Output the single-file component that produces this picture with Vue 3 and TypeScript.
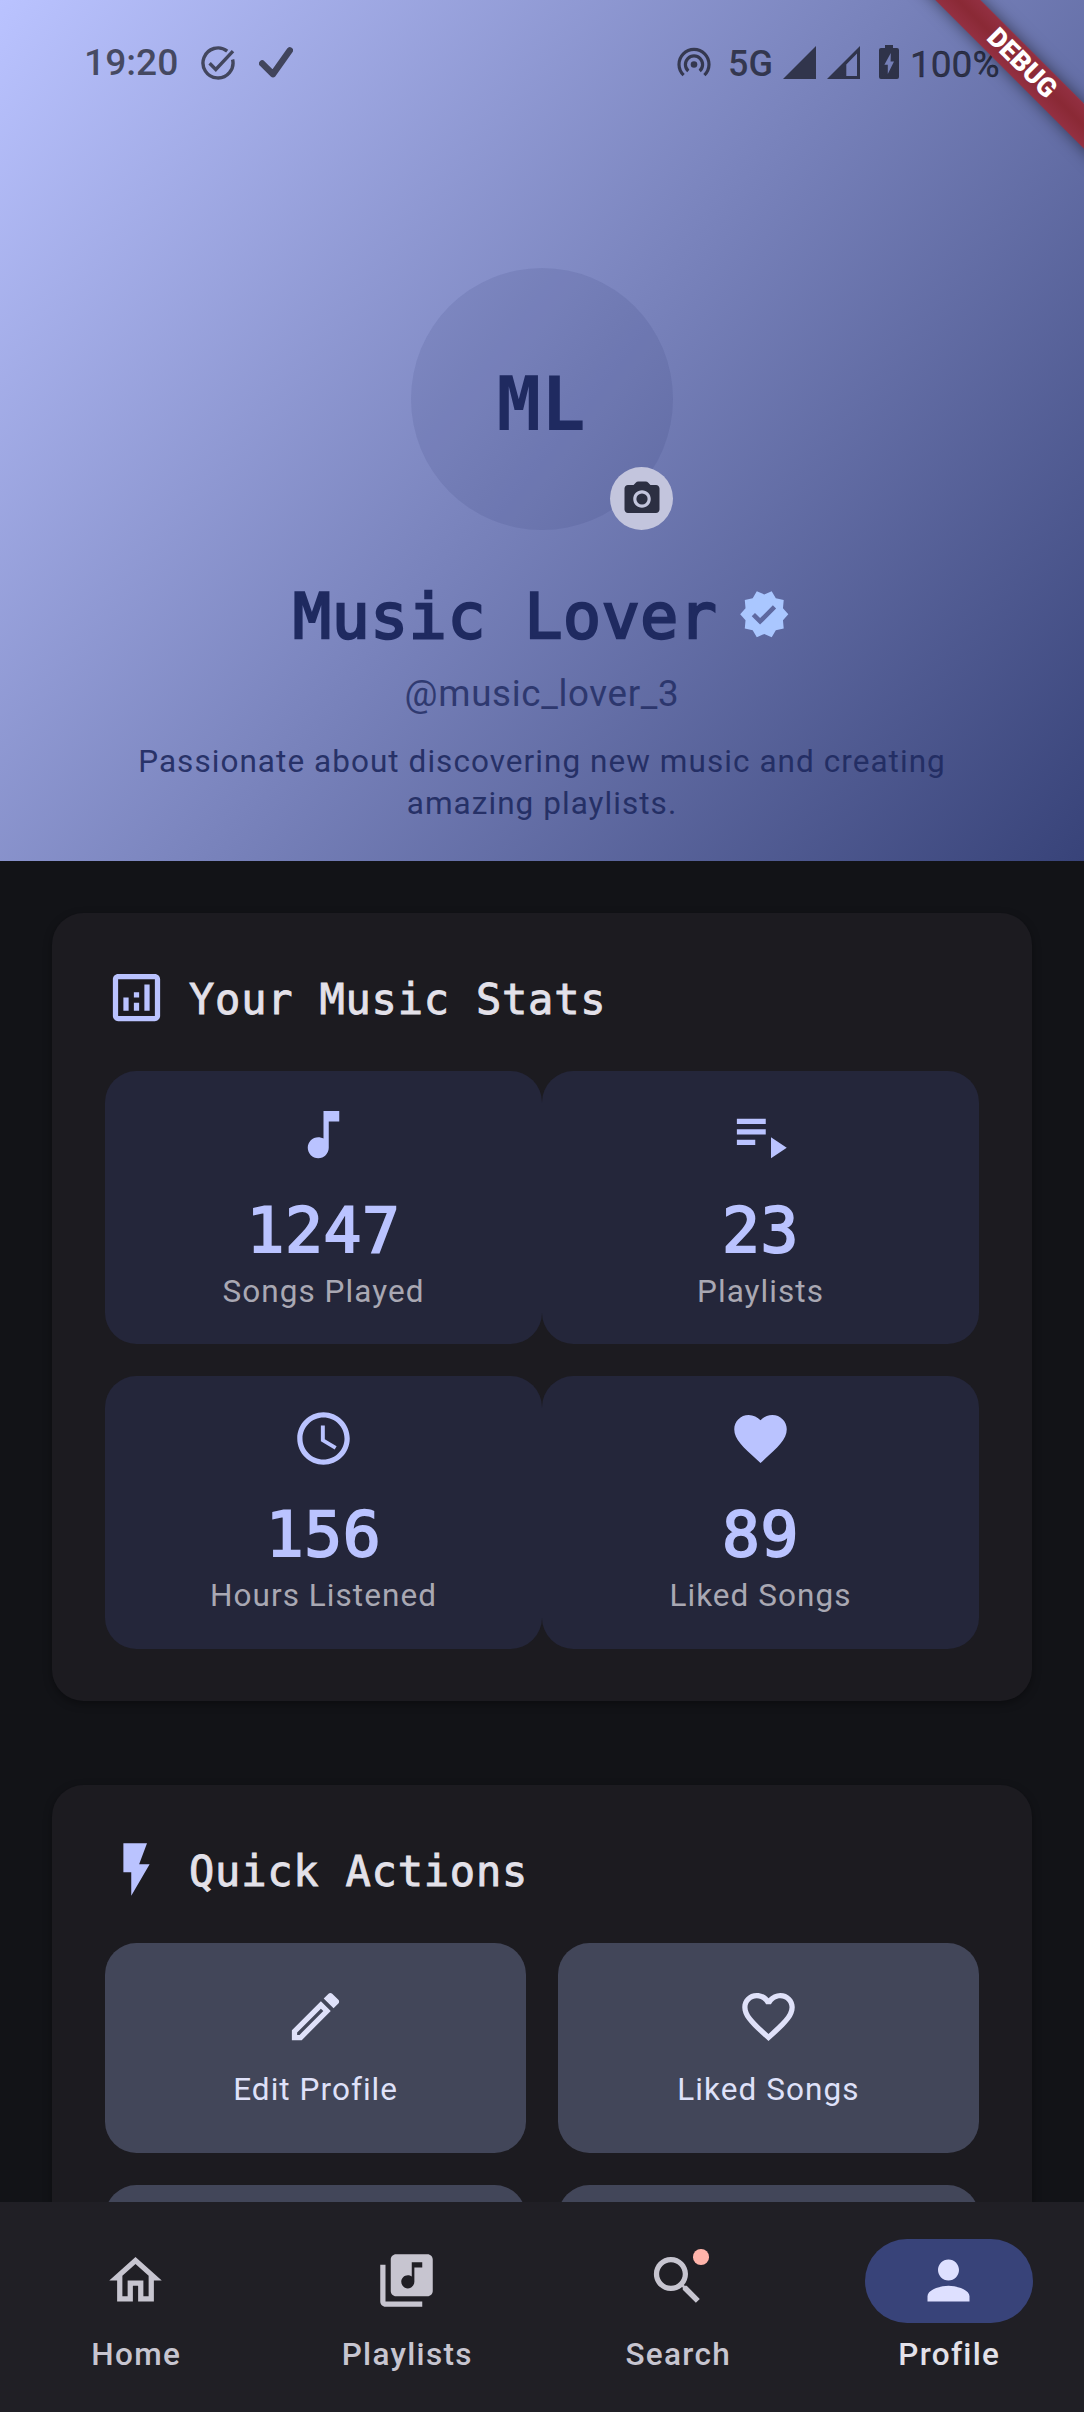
<script setup lang="ts">
interface Item {
  label: string
  icon: string
}
interface Stat extends Item {
  value: string
}
interface Tab extends Item {
  active?: boolean
  dot?: boolean
}

const heart =
  'M12 21.35l-1.45-1.32C5.4 15.36 2 12.28 2 8.5 2 5.42 4.42 3 7.5 3c1.74 0 3.41.81 4.5 2.09C13.09 3.81 14.76 3 16.5 3 19.58 3 22 5.42 22 8.5c0 3.78-3.4 6.86-8.55 11.54L12 21.35z'

const stats: Stat[] = [
  { value: '1247', label: 'Songs Played', icon: 'M12 3v10.55c-.59-.34-1.27-.55-2-.55-2.21 0-4 1.79-4 4s1.79 4 4 4 4-1.79 4-4V7h4V3h-6z' },
  { value: '23', label: 'Playlists', icon: 'M3 6h11v2H3zM3 10h11v2H3zM3 14h7v2H3zM16 13v8l6-4z' },
  {
    value: '156',
    label: 'Hours Listened',
    icon: 'M11.99 2C6.47 2 2 6.48 2 12s4.47 10 9.99 10C17.52 22 22 17.52 22 12S17.52 2 11.99 2zM12 20c-4.42 0-8-3.58-8-8s3.58-8 8-8 8 3.58 8 8-3.58 8-8 8zM12.5 7H11v6l5.25 3.15.75-1.23-4.5-2.67z',
  },
  { value: '89', label: 'Liked Songs', icon: heart },
]

const actions: Item[] = [
  {
    label: 'Edit Profile',
    icon: 'M14.06 9.02l.92.92L5.92 19H5v-.92l9.06-9.06M17.66 3c-.25 0-.51.1-.7.29l-1.83 1.83 3.75 3.75 1.83-1.83c.39-.39.39-1.02 0-1.41l-2.34-2.34c-.2-.2-.45-.29-.71-.29zm-3.6 3.19L3 17.25V21h3.75L17.81 9.94l-3.75-3.75z',
  },
  {
    label: 'Liked Songs',
    icon: 'M16.5 3c-1.74 0-3.41.81-4.5 2.09C10.91 3.81 9.24 3 7.5 3 4.42 3 2 5.42 2 8.5c0 3.78 3.4 6.86 8.55 11.54L12 21.35l1.45-1.32C18.6 15.36 22 12.28 22 8.5 22 5.42 19.58 3 16.5 3zm-4.4 15.55l-.1.1-.1-.1C7.14 14.24 4 11.39 4 8.5 4 6.5 5.5 5 7.5 5c1.54 0 3.04.99 3.57 2.36h1.87C13.46 5.99 14.96 5 16.5 5c2 0 3.5 1.5 3.5 3.5 0 2.89-3.14 5.74-7.9 10.05z',
  },
]

const tabs: Tab[] = [
  { label: 'Home', icon: 'M12 5.69l5 4.5V18h-2v-6H9v6H7v-7.81l5-4.5M12 3L2 12h3v8h6v-6h2v6h6v-8h3L12 3z' },
  {
    label: 'Playlists',
    icon: 'M20 2H8c-1.1 0-2 .9-2 2v12c0 1.1.9 2 2 2h12c1.1 0 2-.9 2-2V4c0-1.1-.9-2-2-2zm-2 5h-3v5.5c0 1.38-1.12 2.5-2.5 2.5S10 13.88 10 12.5s1.12-2.5 2.5-2.5c.57 0 1.08.19 1.5.51V5h4v2zM4 6H2v14c0 1.1.9 2 2 2h14v-2H4V6z',
  },
  {
    label: 'Search',
    dot: true,
    icon: 'M15.5 14h-.79l-.28-.27C15.41 12.59 16 11.11 16 9.5 16 5.91 13.09 3 9.5 3S3 5.91 3 9.5 5.91 16 9.5 16c1.61 0 3.09-.59 4.23-1.57l.27.28v.79l5 4.99L20.49 19l-4.99-5zm-6 0C7.01 14 5 11.99 5 9.5S7.01 5 9.5 5 14 7.01 14 9.5 11.99 14 9.5 14z',
  },
  {
    label: 'Profile',
    active: true,
    icon: 'M12 12c2.21 0 4-1.79 4-4s-1.79-4-4-4-4 1.79-4 4 1.79 4 4 4zm0 2c-2.67 0-8 1.34-8 4v2h16v-2c0-2.66-5.33-4-8-4z',
  },
]
</script>

<template>
  <div class="screen">
    <header class="hero">
      <div class="status">
        <span class="time">19:20</span>
        <svg class="s-task" viewBox="0 0 34 34">
          <path d="M26.2 5.1A15 15 0 1 0 31.6 13.5" />
          <path d="M8.6 17.2l6.2 6.3L32 5.2" />
        </svg>
        <svg class="s-check" viewBox="0 0 34 32"><path d="M3.2 16.5L14 27.2L30.8 3.4" /></svg>
        <span class="grow"></span>
        <svg class="s-hot" viewBox="0 0 34 34">
          <circle cx="17" cy="18.5" r="3.3" />
          <path d="M11.3 25a8.6 8.6 0 1 1 11.4 0" />
          <path d="M6.6 29.2a15 15 0 1 1 20.8 0" />
        </svg>
        <span class="net">5G</span>
        <svg class="s-sig" viewBox="0 0 33 33"><path d="M0 33L33 0V33z" /></svg>
        <svg class="s-sig second" viewBox="0 0 33 33">
          <path fill-rule="evenodd" d="M0 33L33 0V33zM19.3 18.6V30H30V7.6z" />
        </svg>
        <svg class="s-bat" viewBox="0 0 20 34">
          <path
            fill-rule="evenodd"
            d="M6 0h8v3h4a2 2 0 0 1 2 2v27a2 2 0 0 1-2 2H2a2 2 0 0 1-2-2V5a2 2 0 0 1 2-2h4zM11.8 8L5.4 19.8H8.8V29L15 16.6H11.6z"
          />
        </svg>
        <span class="pct">100%</span>
      </div>

      <div class="ribbon-clip"><div class="ribbon">DEBUG</div></div>

      <div class="avatar">
        <span class="initials">ML</span>
        <span class="camera">
          <svg viewBox="0 0 24 24">
            <circle cx="12" cy="12" r="3.2" />
            <path
              d="M4 4h3.17l1.24-1.35C8.78 2.24 9.32 2 9.88 2h4.24c.56 0 1.1.24 1.48.65L16.83 4H20c1.1 0 2 .9 2 2v12c0 1.1-.9 2-2 2H4c-1.1 0-2-.9-2-2V6c0-1.1.9-2 2-2zm8 13c2.76 0 5-2.24 5-5s-2.24-5-5-5-5 2.24-5 5 2.24 5 5 5z"
            />
          </svg>
        </span>
      </div>

      <div class="name-row">
        <h1 class="name">Music Lover</h1>
        <svg class="verified" viewBox="0 0 24 24">
          <path
            d="M23 12l-2.44-2.79.34-3.69-3.61-.82-1.89-3.2L12 2.96 8.6 1.5 6.71 4.69 3.1 5.5l.34 3.7L1 12l2.44 2.79-.34 3.7 3.61.82L8.6 22.5l3.4-1.47 3.4 1.46 1.89-3.19 3.61-.82-.34-3.69L23 12zm-12.91 4.72l-3.8-3.81 1.48-1.48 2.32 2.33 5.85-5.87 1.48 1.48-7.33 7.35z"
          />
        </svg>
      </div>
      <p class="handle">@music_lover_3</p>
      <p class="bio">Passionate about discovering new music and creating amazing playlists.</p>
    </header>

    <main class="content">
      <section class="card">
        <div class="card-head">
          <svg class="icon" viewBox="0 0 24 24">
            <path
              d="M19 3H5c-1.1 0-2 .9-2 2v14c0 1.1.9 2 2 2h14c1.1 0 2-.9 2-2V5c0-1.1-.9-2-2-2zm0 16H5V5h14v14zM7 12h2v5H7zM15 7h2v10h-2zM11 14h2v3h-2zM11 10h2v2h-2z"
            />
          </svg>
          <h2>Your Music Stats</h2>
        </div>
        <div class="stats">
          <div v-for="s in stats" :key="s.label" class="stat">
            <svg class="icon" viewBox="0 0 24 24"><path :d="s.icon" /></svg>
            <strong>{{ s.value }}</strong>
            <span>{{ s.label }}</span>
          </div>
        </div>
      </section>

      <section class="card">
        <div class="card-head">
          <svg class="icon" viewBox="0 0 24 24"><path d="M7 2v11h3v9l7-12h-4l3-8z" /></svg>
          <h2>Quick Actions</h2>
        </div>
        <div class="actions">
          <button v-for="a in actions" :key="a.label" class="action">
            <svg class="icon" viewBox="0 0 24 24"><path :d="a.icon" /></svg>
            <span>{{ a.label }}</span>
          </button>
          <div class="action"></div>
          <div class="action"></div>
        </div>
      </section>
    </main>

    <nav class="tabs">
      <a v-for="t in tabs" :key="t.label" class="tab" :class="{ active: t.active }">
        <span class="pill">
          <span class="tab-icon">
            <svg class="icon" viewBox="0 0 24 24"><path :d="t.icon" /></svg>
            <i v-if="t.dot" class="dot"></i>
          </span>
        </span>
        <span class="tab-label">{{ t.label }}</span>
      </a>
    </nav>
  </div>
</template>

<style>
body {
  margin: 0;
  background: #121317;
}
</style>

<style scoped>
.screen {
  width: 1084px;
  height: 2412px;
  display: flex;
  flex-direction: column;
  overflow: hidden;
  background: #121317;
  font-family: Roboto, 'Liberation Sans', sans-serif;
  color: #e3e1e9;
}
h1,
h2,
p {
  margin: 0;
  font-weight: 400;
}
svg {
  display: block;
  flex: none;
  fill: currentColor;
}
.icon {
  width: 63px;
  height: 63px;
}

.hero {
  position: relative;
  flex: none;
  height: 861px;
  display: flex;
  flex-direction: column;
  align-items: center;
  background: linear-gradient(128.46deg, #bac3ff, #384379);
  color: #1f2a60;
}
.status {
  width: 100%;
  height: 125px;
  margin-bottom: 142.5px;
  padding: 0 84px 0 84px;
  box-sizing: border-box;
  display: flex;
  align-items: center;
  color: rgba(0, 0, 0, 0.6);
}
.time {
  width: 117px;
  padding-bottom: 2px;
  font-size: 37.2px;
  font-weight: 500;
}
.grow {
  flex: 1;
}
.s-task,
.s-check,
.s-hot {
  fill: none;
  stroke: currentColor;
}
.s-task {
  width: 34px;
  height: 34px;
  stroke-width: 3.4;
}
.s-check {
  width: 34px;
  height: 32px;
  margin-left: 24px;
  stroke-width: 6.4;
  stroke-linecap: round;
  stroke-linejoin: round;
}
.s-hot {
  width: 34px;
  height: 34px;
  margin-right: 17px;
  stroke-width: 3.2;
}
.s-hot circle {
  fill: currentColor;
  stroke: none;
}
.net {
  width: 55px;
  padding-top: 3px;
  font-size: 36px;
  font-weight: 500;
}
.s-sig {
  width: 33px;
  height: 33px;
}
.second {
  margin: 0 19px 0 11px;
}
.s-bat {
  width: 20px;
  height: 34px;
  margin-bottom: 1px;
}
.pct {
  width: 90px;
  margin-left: 11px;
  padding-top: 3px;
  font-size: 37px;
  -webkit-text-stroke: 0.4px currentColor;
}

.ribbon-clip {
  position: absolute;
  top: 0;
  right: 0;
  width: 220px;
  height: 220px;
  overflow: hidden;
}
.ribbon {
  position: absolute;
  left: 27px;
  top: 47.25px;
  width: 260px;
  height: 31.5px;
  padding-left: 2px;
  box-sizing: border-box;
  line-height: 31.5px;
  text-align: center;
  font-size: 26.8px;
  font-weight: 900;
  color: #fff;
  background: linear-gradient(#933042, #8a2935 50%, #933042);
  box-shadow: 0 0 16px rgba(0, 0, 0, 0.5);
  transform: rotate(45deg);
}

.avatar {
  position: relative;
  flex: none;
  width: 262.5px;
  height: 262.5px;
  border-radius: 50%;
  background: rgba(31, 42, 96, 0.1);
  display: flex;
  align-items: center;
  justify-content: center;
}
.initials {
  height: 86px;
  margin-right: 2px;
  line-height: 96px;
  font-family: 'DejaVu Sans Mono', monospace;
  font-size: 74px;
  font-weight: 700;
}
.camera {
  position: absolute;
  right: 0;
  bottom: 0;
  width: 63px;
  height: 63px;
  border-radius: 50%;
  background: #c3c5dd;
  color: #2c2f42;
  display: flex;
  align-items: center;
  justify-content: center;
}
.camera svg {
  width: 42px;
  height: 42px;
}
.name-row {
  flex: none;
  margin-top: 42px;
  height: 84px;
  display: flex;
  align-items: center;
  gap: 21px;
}
.name {
  height: 84px;
  line-height: 90px;
  font-family: 'DejaVu Sans Mono', monospace;
  font-size: 63px;
  letter-spacing: 0.65px;
  -webkit-text-stroke: 2.4px currentColor;
}
.verified {
  width: 52.5px;
  height: 52.5px;
  color: #aac7ff;
}
.handle {
  margin-top: 11.5px;
  font-size: 36.75px;
  line-height: 52.5px;
  letter-spacing: 0.66px;
  opacity: 0.8;
}
.bio {
  margin-top: 21px;
  width: 860px;
  font-size: 31.5px;
  line-height: 42px;
  letter-spacing: 1.05px;
  text-align: center;
  opacity: 0.9;
}

.content {
  flex: 1;
  min-height: 0;
  overflow: hidden;
  padding: 52px 52px 0;
  display: flex;
  flex-direction: column;
  gap: 84px;
}
.card {
  flex: none;
  padding: 53px 53px 52.5px;
  border-radius: 31.5px;
  background: #1c1b20;
  box-shadow: 0 3px 8px rgba(0, 0, 0, 0.35);
}
.card-head {
  display: flex;
  gap: 21px;
  margin-bottom: 42px;
  color: #bac3ff;
}
.card-head h2 {
  height: 63px;
  line-height: 67px;
  font-family: 'DejaVu Sans Mono', monospace;
  font-size: 42px;
  letter-spacing: 0.8px;
  color: #e3e1e9;
  -webkit-text-stroke: 0.9px currentColor;
}
.stats {
  display: grid;
  grid-template-columns: 1fr 1fr;
  row-gap: 31.5px;
}
.stat {
  height: 273px;
  box-sizing: border-box;
  padding: 31.5px 0;
  border-radius: 31.5px;
  background: #24263a;
  color: #bac3ff;
  display: flex;
  flex-direction: column;
  align-items: center;
}
.stat strong {
  margin-top: 21px;
  height: 84px;
  line-height: 88px;
  font-family: 'DejaVu Sans Mono', monospace;
  font-size: 63px;
  font-weight: 400;
  letter-spacing: 0.6px;
  -webkit-text-stroke: 2px currentColor;
}
.stat span {
  font-size: 31.5px;
  line-height: 42px;
  letter-spacing: 1.05px;
  color: #a9a8b3;
}
.actions {
  display: grid;
  grid-template-columns: 1fr 1fr;
  gap: 31.5px;
}
.action {
  height: 210px;
  box-sizing: border-box;
  padding: 42px 0;
  border: 0;
  border-radius: 31.5px;
  background: #424659;
  color: #dfe1f9;
  font-family: inherit;
  display: flex;
  flex-direction: column;
  align-items: center;
  gap: 21px;
}
.action span {
  font-size: 31.5px;
  line-height: 42px;
  letter-spacing: 1.05px;
}

.tabs {
  flex: none;
  height: 210px;
  display: flex;
  background: #201f25;
}
.tab {
  flex: 1;
  padding-top: 36.75px;
  display: flex;
  flex-direction: column;
  align-items: center;
  gap: 11.5px;
  color: #c7c5d0;
}
.pill {
  width: 168px;
  height: 84px;
  border-radius: 42px;
  display: flex;
  align-items: center;
  justify-content: center;
}
.tab-icon {
  position: relative;
}
.dot {
  position: absolute;
  top: 0;
  right: 0;
  width: 15.75px;
  height: 15.75px;
  border-radius: 50%;
  background: #ffb4ab;
}
.tab-label {
  padding-left: 1.5px;
  font-size: 31.5px;
  line-height: 42px;
  font-weight: 500;
  letter-spacing: 1.31px;
}
.active {
  color: #e3e1e9;
}
.active .pill {
  background: #384379;
  color: #dee0ff;
}
</style>
